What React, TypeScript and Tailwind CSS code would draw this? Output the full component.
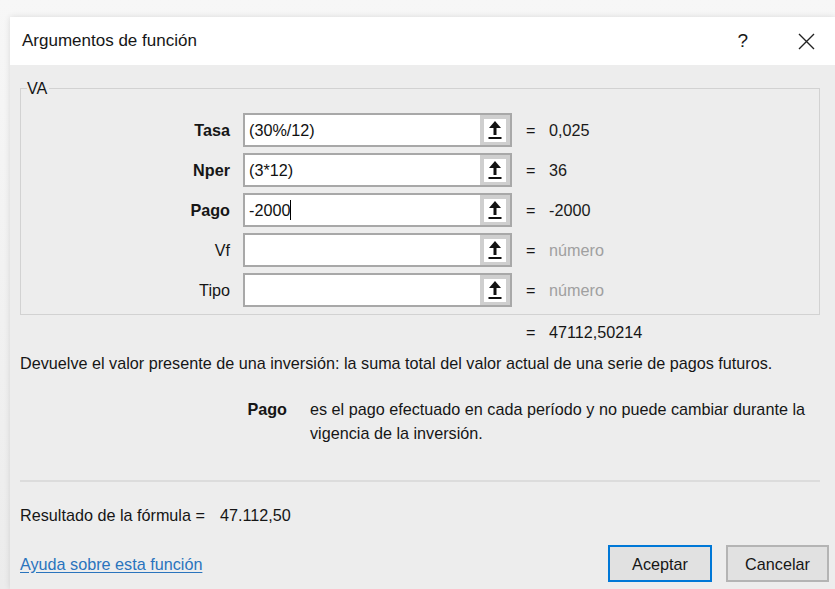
import React from "react";

type Arg = { name: string; value: string; result: string; required: boolean; caret?: boolean };

const args: Arg[] = [
  { name: "Tasa", value: "(30%/12)", result: "0,025", required: true },
  { name: "Nper", value: "(3*12)", result: "36", required: true },
  { name: "Pago", value: "-2000", result: "-2000", required: true, caret: true },
  { name: "Vf", value: "", result: "número", required: false },
  { name: "Tipo", value: "", result: "número", required: false },
];

function CollapseIcon() {
  return (
    <svg width="14" height="20" viewBox="0 0 14 20" aria-hidden="true">
      <polygon points="7,1 1,8 13,8" fill="#111" />
      <rect x="5.5" y="7" width="3" height="8" fill="#111" />
      <rect x="0.5" y="17" width="13" height="2" fill="#111" />
    </svg>
  );
}

function ArgRow({ a }: { a: Arg }) {
  return (
    <div className="flex items-center h-[34px]">
      <div
        className={`w-[209px] mr-[13px] text-right ${a.required ? "font-bold" : "font-normal"}`}
      >
        {a.name}
      </div>
      <div className="flex h-[34px] w-[269px] border-2 border-[#a8a8a8] bg-white">
        <div className="flex-1 flex items-center pl-[4px] text-[#111]">
          {a.value}
          {a.caret && <span className="inline-block w-px h-[20px] bg-black" />}
        </div>
        <div className="w-[30px] bg-[#cfcfcf] flex items-center justify-center">
          <div className="w-[22px] h-[23px] bg-white flex items-center justify-center">
            <CollapseIcon />
          </div>
        </div>
      </div>
      <div className="ml-[14px] w-[23px]">=</div>
      <div className={a.required ? "text-[#1a1a1a]" : "text-[#a0a0a0]"}>{a.result}</div>
    </div>
  );
}

export default function App() {
  return (
    <div
      className="w-[835px] h-[589px] overflow-hidden bg-gradient-to-b from-[#f7f7f7] to-[#ececec] pt-[17px] pl-[10px] text-[16.2px] leading-[24px] text-[#161616]"
      style={{ fontFamily: '"Liberation Sans", Arial, sans-serif' }}
    >
      <div className="h-[572px] flex flex-col shadow-[0_0_6px_rgba(0,0,0,0.12)]">
        {/* title bar */}
        <div className="h-[48px] bg-white flex items-center pl-[12px] pr-[20px] shrink-0">
          <div className="flex-1 text-[17px]">Argumentos de función</div>
          <div className="text-[19px] mr-[50px]">?</div>
          <svg width="17" height="17" viewBox="0 0 17 17" aria-hidden="true">
            <path d="M1 1 L16 16 M16 1 L1 16" stroke="#222" strokeWidth="1.4" />
          </svg>
        </div>

        {/* body */}
        <div className="flex-1 bg-[#ededed] pl-[10px] pr-[15px] flex flex-col">
          <div className="relative mt-[23px] border border-[#d2d2d2] pt-[24px] pb-[7px] flex flex-col gap-[6px]">
            <span className="absolute -top-[13px] left-[6px] bg-[#ededed] pr-[2px]">VA</span>
            {args.map((a) => (
              <ArgRow key={a.name} a={a} />
            ))}
          </div>

          <div className="flex mt-[5px] h-[24px]">
            <div className="ml-[506px] w-[23px]">=</div>
            <div>47112,50214</div>
          </div>

          <div className="mt-[7px] whitespace-nowrap">
            Devuelve el valor presente de una inversión: la suma total del valor actual de una serie de pagos futuros.
          </div>

          <div className="flex mt-[22px]">
            <div className="w-[267px] text-right font-bold shrink-0">Pago</div>
            <div className="ml-[23px] w-[505px]">
              es el pago efectuado en cada período y no puede cambiar durante la vigencia de la inversión.
            </div>
          </div>

          <div className="mt-[35px] border-t-2 border-[#dcdcdc]" />

          <div className="flex mt-[21px] whitespace-nowrap">
            <div className="w-[200px]">Resultado de la fórmula =</div>
            <div>47.112,50</div>
          </div>

          <div className="flex items-center mt-[18px] mr-[-9px]">
            <a className="flex-1 text-[#2a74bd] underline underline-offset-2" href="#">
              Ayuda sobre esta función
            </a>
            <button className="w-[104px] h-[37px] bg-[#e1e1e1] border-2 border-[#0078d7]">
              Aceptar
            </button>
            <button className="w-[103px] h-[37px] ml-[14px] bg-[#e1e1e1] border-2 border-[#b4b4b4]">
              Cancelar
            </button>
          </div>
        </div>
      </div>
    </div>
  );
}
